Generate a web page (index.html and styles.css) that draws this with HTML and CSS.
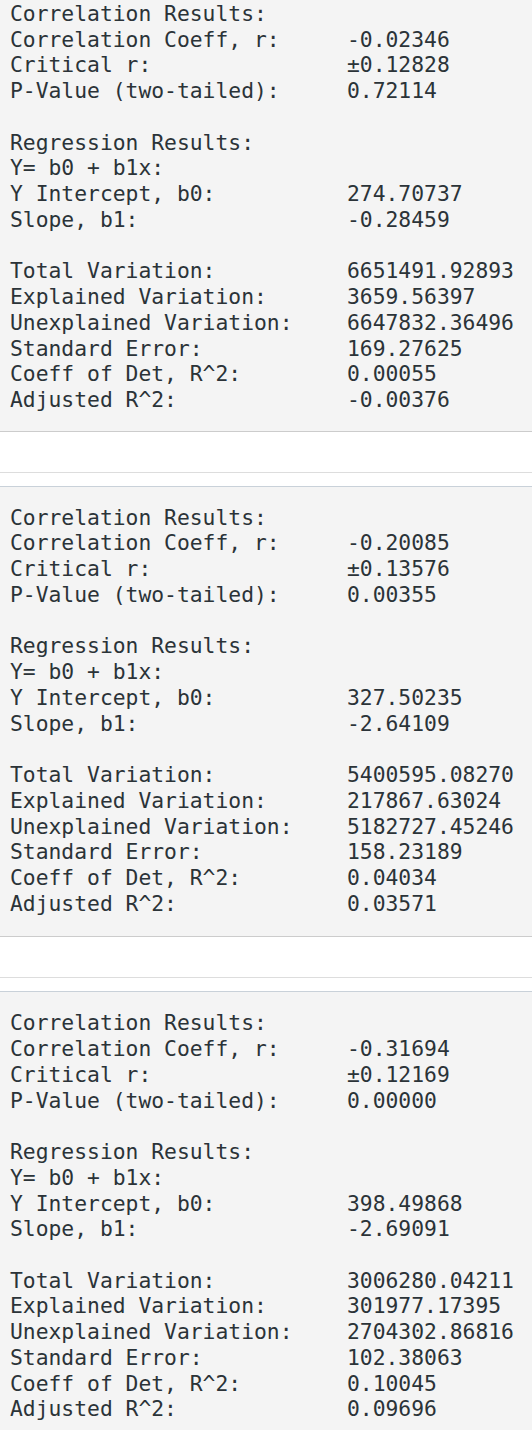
FILE: index.html
```html
<!DOCTYPE html>
<html lang="en">
<head>
<meta charset="utf-8">
<title>Regression Output</title>
<link rel="stylesheet" href="styles.css">
</head>
<body>
<main class="page">
  <section class="result">
    <div class="output output--clipped">
      <div class="group">
        <div class="row"><span class="label">Correlation Results:</span></div>
        <div class="row"><span class="label">Correlation Coeff, r:</span><span class="value">-0.02346</span></div>
        <div class="row"><span class="label">Critical r:</span><span class="value">±0.12828</span></div>
        <div class="row"><span class="label">P-Value (two-tailed):</span><span class="value">0.72114</span></div>
      </div>
      <div class="group">
        <div class="row"><span class="label">Regression Results:</span></div>
        <div class="row"><span class="label">Y= b0 + b1x:</span></div>
        <div class="row"><span class="label">Y Intercept, b0:</span><span class="value">274.70737</span></div>
        <div class="row"><span class="label">Slope, b1:</span><span class="value">-0.28459</span></div>
      </div>
      <div class="group">
        <div class="row"><span class="label">Total Variation:</span><span class="value">6651491.92893</span></div>
        <div class="row"><span class="label">Explained Variation:</span><span class="value">3659.56397</span></div>
        <div class="row"><span class="label">Unexplained Variation:</span><span class="value">6647832.36496</span></div>
        <div class="row"><span class="label">Standard Error:</span><span class="value">169.27625</span></div>
        <div class="row"><span class="label">Coeff of Det, R^2:</span><span class="value">0.00055</span></div>
        <div class="row"><span class="label">Adjusted R^2:</span><span class="value">-0.00376</span></div>
      </div>
    </div>
    <div class="spacer"></div>
  </section>

  <section class="result">
    <div class="output">
      <div class="group">
        <div class="row"><span class="label">Correlation Results:</span></div>
        <div class="row"><span class="label">Correlation Coeff, r:</span><span class="value">-0.20085</span></div>
        <div class="row"><span class="label">Critical r:</span><span class="value">±0.13576</span></div>
        <div class="row"><span class="label">P-Value (two-tailed):</span><span class="value">0.00355</span></div>
      </div>
      <div class="group">
        <div class="row"><span class="label">Regression Results:</span></div>
        <div class="row"><span class="label">Y= b0 + b1x:</span></div>
        <div class="row"><span class="label">Y Intercept, b0:</span><span class="value">327.50235</span></div>
        <div class="row"><span class="label">Slope, b1:</span><span class="value">-2.64109</span></div>
      </div>
      <div class="group">
        <div class="row"><span class="label">Total Variation:</span><span class="value">5400595.08270</span></div>
        <div class="row"><span class="label">Explained Variation:</span><span class="value">217867.63024</span></div>
        <div class="row"><span class="label">Unexplained Variation:</span><span class="value">5182727.45246</span></div>
        <div class="row"><span class="label">Standard Error:</span><span class="value">158.23189</span></div>
        <div class="row"><span class="label">Coeff of Det, R^2:</span><span class="value">0.04034</span></div>
        <div class="row"><span class="label">Adjusted R^2:</span><span class="value">0.03571</span></div>
      </div>
    </div>
    <div class="spacer"></div>
  </section>

  <section class="result">
    <div class="output">
      <div class="group">
        <div class="row"><span class="label">Correlation Results:</span></div>
        <div class="row"><span class="label">Correlation Coeff, r:</span><span class="value">-0.31694</span></div>
        <div class="row"><span class="label">Critical r:</span><span class="value">±0.12169</span></div>
        <div class="row"><span class="label">P-Value (two-tailed):</span><span class="value">0.00000</span></div>
      </div>
      <div class="group">
        <div class="row"><span class="label">Regression Results:</span></div>
        <div class="row"><span class="label">Y= b0 + b1x:</span></div>
        <div class="row"><span class="label">Y Intercept, b0:</span><span class="value">398.49868</span></div>
        <div class="row"><span class="label">Slope, b1:</span><span class="value">-2.69091</span></div>
      </div>
      <div class="group">
        <div class="row"><span class="label">Total Variation:</span><span class="value">3006280.04211</span></div>
        <div class="row"><span class="label">Explained Variation:</span><span class="value">301977.17395</span></div>
        <div class="row"><span class="label">Unexplained Variation:</span><span class="value">2704302.86816</span></div>
        <div class="row"><span class="label">Standard Error:</span><span class="value">102.38063</span></div>
        <div class="row"><span class="label">Coeff of Det, R^2:</span><span class="value">0.10045</span></div>
        <div class="row"><span class="label">Adjusted R^2:</span><span class="value">0.09696</span></div>
      </div>
    </div>
    <div class="spacer"></div>
  </section>
</main>
</body>
</html>
```

FILE: styles.css
```css
html, body {
  margin: 0;
  padding: 0;
  background: #ffffff;
}

.page {
  display: flex;
  flex-direction: column;
  gap: 13px;
}

.result {
  display: flex;
  flex-direction: column;
}

.output {
  background: #f4f4f4;
  border-top: 1px solid #c9d1d9;
  border-bottom: 1px solid #cccccc;
  padding: 18px 10px 20px 10px;
  font-family: "DejaVu Sans Mono", "Liberation Mono", monospace;
  font-size: 21.33px;
  line-height: 25.73px;
  color: #2b3338;
  display: flex;
  flex-direction: column;
  gap: 25.73px;
}

.output--clipped {
  border-top: none;
  padding-top: 1px;
  padding-bottom: 18px;
}

.group {
  display: flex;
  flex-direction: column;
}

.row {
  display: grid;
  grid-template-columns: 337px 1fr;
  white-space: pre;
}

.spacer {
  height: 40px;
  border-bottom: 1px solid #dddddd;
}
```
